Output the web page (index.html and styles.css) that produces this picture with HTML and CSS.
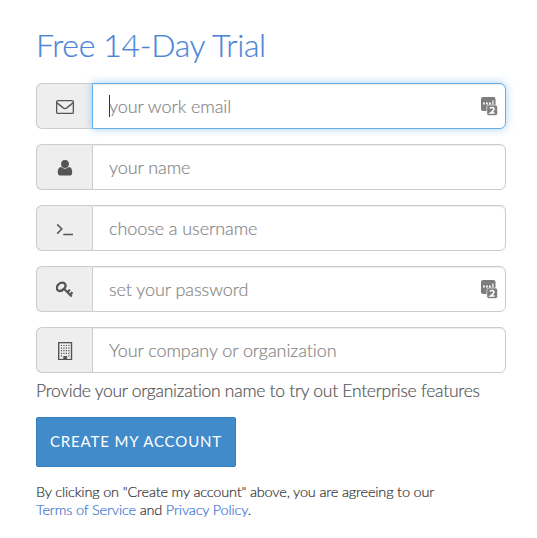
FILE: index.html
```html
<!DOCTYPE html>
<html lang="en">
<head>
<meta charset="utf-8">
<title>Free 14-Day Trial</title>
<link rel="stylesheet" href="styles.css">
</head>
<body>
<form class="signup">
  <h1 class="title">Free 14-Day Trial</h1>
  <div class="group active">
    <span class="addon"><svg class="icon" viewBox="0 0 18 18"><rect x=".65" y="2.65" width="16.7" height="12.7" rx="1.2" fill="none" stroke="currentColor" stroke-width="1.3"/><path d="M1 4.7C3 6.6 5 8 7 9.7Q9 11.4 11 9.7C13 8 15 6.6 17 4.7" fill="none" stroke="currentColor" stroke-width="1.3"/></svg></span>
    <input class="field" type="text" placeholder="your work email">
    <span class="caret"></span>
    <svg class="badge" viewBox="0 0 17 19"><rect width="14.5" height="14" rx="2" fill="#7d7d7d"/><path d="M2 5.5h1.8v2H2zM5 5.5h1.8v2H5zM8 5.5h1.8v2H8zM11.3 3.5h1.2v4h-1.2z" fill="#fff"/><rect x="5.8" y="8" width="10.7" height="10.5" rx="2" fill="#7d7d7d" stroke="#fff" stroke-width=".6"/><path d="M8.8 11.4Q11.2 9.7 12.6 11Q13.8 12.6 11.2 14.6L9.4 16H13.6" fill="none" stroke="#fff" stroke-width="1.5"/></svg>
  </div>
  <div class="group">
    <span class="addon"><svg class="icon" viewBox="0 0 18 18"><circle cx="9" cy="5" r="3.9" fill="currentColor"/><path d="M5.2 7.9C2.6 8 1.8 10.8 1.8 13.4Q1.8 16.5 4.4 16.5H13.6Q16.2 16.5 16.2 13.4C16.2 10.8 15.4 8 12.8 7.9Q9 11.4 5.2 7.9Z" fill="currentColor"/></svg></span>
    <input class="field" type="text" placeholder="your name">
  </div>
  <div class="group">
    <span class="addon"><svg class="icon" viewBox="0 0 18 18"><path d="M1.2 4.4L5.8 9L1.2 13.6M7.3 14.4H17" fill="none" stroke="currentColor" stroke-width="1.5"/></svg></span>
    <input class="field" type="text" placeholder="choose a username">
  </div>
  <div class="group">
    <span class="addon"><svg class="icon" viewBox="0 0 18 18"><path d="M9.2 3.3C8 1 4.8 1 2.6 3.2C.3 5.5.3 8.3 2 9.4C3.6 10.5 6.1 9.7 7.9 7.9C9.5 6.3 10 4.8 9.2 3.3Z" fill="none" stroke="currentColor" stroke-width="2.3"/><path d="M8 7.8L15.7 15.6M11.4 11.3L13.9 8.8M14 13.7L16.5 11.2" fill="none" stroke="currentColor" stroke-width="2.2"/></svg></span>
    <input class="field" type="text" placeholder="set your password">
    <svg class="badge" viewBox="0 0 17 19"><rect width="14.5" height="14" rx="2" fill="#7d7d7d"/><path d="M2 5.5h1.8v2H2zM5 5.5h1.8v2H5zM8 5.5h1.8v2H8zM11.3 3.5h1.2v4h-1.2z" fill="#fff"/><rect x="5.8" y="8" width="10.7" height="10.5" rx="2" fill="#7d7d7d" stroke="#fff" stroke-width=".6"/><path d="M8.8 11.4Q11.2 9.7 12.6 11Q13.8 12.6 11.2 14.6L9.4 16H13.6" fill="none" stroke="#fff" stroke-width="1.5"/></svg>
  </div>
  <div class="group">
    <span class="addon"><svg class="icon" viewBox="0 0 18 18"><rect x="2.7" y=".6" width="12.8" height="17" fill="none" stroke="currentColor" stroke-width="1.4"/><path d="M4.9 3.5h8.6M4.9 6.1h8.6M4.9 8.7h8.6M4.9 11.3h8.6" stroke="currentColor" stroke-width="1.2" stroke-dasharray="1.2 1.25"/><path d="M4.9 13.3h1.2v1.2H4.9zM12.2 13.3h1.2v1.2h-1.2zM7.3 14h3.8v3.4H7.3z" fill="currentColor"/></svg></span>
    <input class="field" type="text" placeholder="Your company or organization">
  </div>
  <p class="help">Provide your organization name to try out Enterprise features</p>
  <button class="submit" type="button">CREATE MY ACCOUNT</button>
  <p class="legal">By clicking on "Create my account" above, you are agreeing to our<br><a href="#">Terms of Service</a> and <a href="#">Privacy Policy</a>.</p>
</form>
</body>
</html>
```
FILE: styles.css
```css
* { box-sizing: border-box; }
body {
  margin: 0;
  background: #fff;
  color: #555;
  font-family: Lato, "Liberation Sans", sans-serif;
  font-weight: 300;
  -webkit-text-stroke: .2px currentColor;
}
.signup { width: 470px; margin-left: 36px; padding-top: 26px; }
.title {
  margin: 0 0 19px;
  color: #4b86d6;
  font-size: 32px;
  font-weight: 300;
  letter-spacing: -.35px;
  line-height: 38px;
  white-space: nowrap;
}
.group { position: relative; display: flex; height: 46px; margin-bottom: 15px; }
.addon {
  display: flex;
  flex: 0 0 56px;
  align-items: center;
  justify-content: center;
  padding-top: 2px;
  border: 1px solid #ccc;
  border-right: 0;
  border-radius: 6px 0 0 6px;
  background: #eee;
  color: #555;
}
.icon { width: 18px; height: 18px; }
.field {
  flex: 1;
  min-width: 0;
  padding: 0 16px;
  border: 1px solid #ccc;
  border-radius: 0 6px 6px 0;
  outline: 0;
  background: #fff;
  box-shadow: inset 0 1px 1px rgba(0, 0, 0, .075);
  color: #555;
  font: inherit;
  font-size: 18px;
  letter-spacing: -.08px;
}
.field::placeholder { color: #888; opacity: 1; }
.active .field {
  border-color: #66afe9;
  box-shadow: inset 0 1px 1px rgba(0, 0, 0, .075), 0 0 8px rgba(102, 175, 233, .6);
}
.caret { position: absolute; left: 73px; top: 12px; width: 1px; height: 22px; background: #333; }
.badge { position: absolute; right: 8px; top: 14px; width: 17px; height: 19px; }
.help { margin: -10px 0 0; font-size: 17.5px; letter-spacing: -.28px; line-height: 26px; white-space: nowrap; }
.submit {
  display: block;
  width: 200px;
  height: 50px;
  margin: 13px 0 0;
  padding: 0 0 2px;
  border: 1px solid #357ebd;
  border-radius: 2px;
  background: #428bca;
  color: #fff;
  font: 400 15px Lato, "Liberation Sans", sans-serif;
  letter-spacing: .87px;
  white-space: nowrap;
  -webkit-text-stroke: 0;
}
.legal { margin: 16px 0 0; color: #333; font-size: 14.5px; letter-spacing: -.18px; line-height: 18px; white-space: nowrap; }
.legal a { color: #3c72d4; text-decoration: none; }
```
